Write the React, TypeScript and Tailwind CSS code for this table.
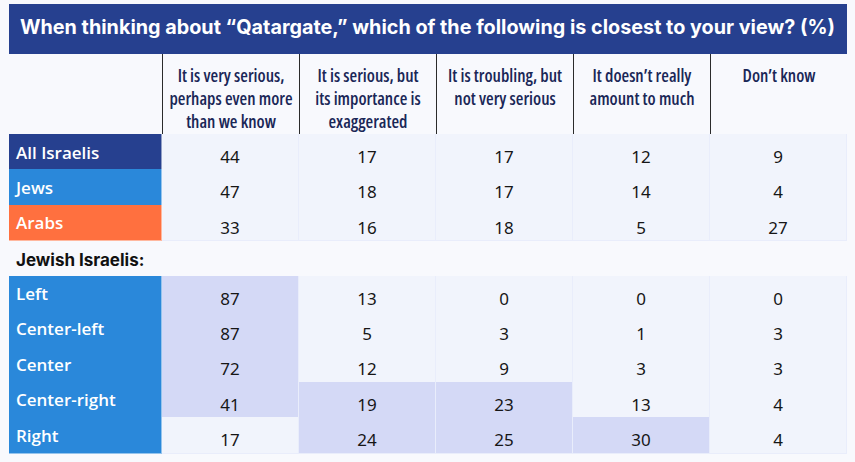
const columns = [
  ["It is very serious,", "perhaps even more", "than we know"],
  ["It is serious, but", "its importance is", "exaggerated"],
  ["It is troubling, but", "not very serious"],
  ["It doesn’t really", "amount to much"],
  ["Don’t know"],
];

type Row = {
  label: string;
  tone: "navy" | "blue" | "orange";
  values: number[];
  marked?: number[];
};

const topRows: Row[] = [
  { label: "All Israelis", tone: "navy", values: [44, 17, 17, 12, 9] },
  { label: "Jews", tone: "blue", values: [47, 18, 17, 14, 4] },
  { label: "Arabs", tone: "orange", values: [33, 16, 18, 5, 27] },
];

const jewishRows: Row[] = [
  { label: "Left", tone: "blue", values: [87, 13, 0, 0, 0], marked: [0] },
  { label: "Center-left", tone: "blue", values: [87, 5, 3, 1, 3], marked: [0] },
  { label: "Center", tone: "blue", values: [72, 12, 9, 3, 3], marked: [0] },
  { label: "Center-right", tone: "blue", values: [41, 19, 23, 13, 4], marked: [0, 1, 2] },
  { label: "Right", tone: "blue", values: [17, 24, 25, 30, 4], marked: [1, 2, 3] },
];

function toneClass(tone: Row["tone"]): string {
  switch (tone) {
    case "navy":
      return "bg-[#26408f]";
    case "orange":
      return "bg-[#ff703f]";
    default:
      return "bg-[#2a88da]";
  }
}

function DataRow({ row }: { row: Row }) {
  return (
    <div className="grid h-[35.4px] grid-cols-[153px_repeat(5,137px)]">
      <div
        className={`${toneClass(row.tone)} flex items-center border-b border-r border-white/50 pl-[7px] pt-[1px] font-['Open_Sans',sans-serif] text-[17px] font-semibold text-white`}
      >
        {row.label}
      </div>
      {row.values.map((value, i) => (
        <div
          key={i}
          className={`${
            row.marked?.includes(i) ? "bg-[#d4d9f6]" : "bg-[#f1f4fc]"
          } flex items-center justify-center border-b border-r border-[#e9edfb] pt-[10px] font-['Noto_Sans',sans-serif] text-[17px] text-[#161616]`}
        >
          {value}
        </div>
      ))}
    </div>
  );
}

export default function App() {
  return (
    <div className="h-[462px] w-[855px] overflow-hidden bg-[#f8f9fd] pl-[9px] pt-[4px]">
      <div className="w-[838px]">
        <div className="flex h-[50px] items-center bg-[#26408f] pl-[11px] pb-[2px]">
          <h1 className="whitespace-nowrap font-['Inter',sans-serif] text-[19.8px] font-bold text-white">
            When thinking about “Qatargate,” which of the following is closest to your view? (%)
          </h1>
        </div>

        <div className="grid h-[80px] grid-cols-[153px_repeat(5,137px)]">
          <div />
          {columns.map((lines, i) => (
            <div
              key={i}
              className="border-l-[1.5px] border-[#2b2b2b] pt-[10px] text-center font-['Open_Sans',sans-serif] text-[17.5px] font-semibold leading-[23px] text-[#1a2757] [font-stretch:75%]"
            >
              {lines.map((line) => (
                <div key={line}>{line}</div>
              ))}
            </div>
          ))}
        </div>

        {topRows.map((row) => (
          <DataRow key={row.label} row={row} />
        ))}

        <div className="flex h-[35.4px] items-center pl-[7px] pt-[5px] font-['Inter',sans-serif] text-[17px] font-bold text-[#111111]">
          Jewish Israelis:
        </div>

        {jewishRows.map((row) => (
          <DataRow key={row.label} row={row} />
        ))}
      </div>
    </div>
  );
}
